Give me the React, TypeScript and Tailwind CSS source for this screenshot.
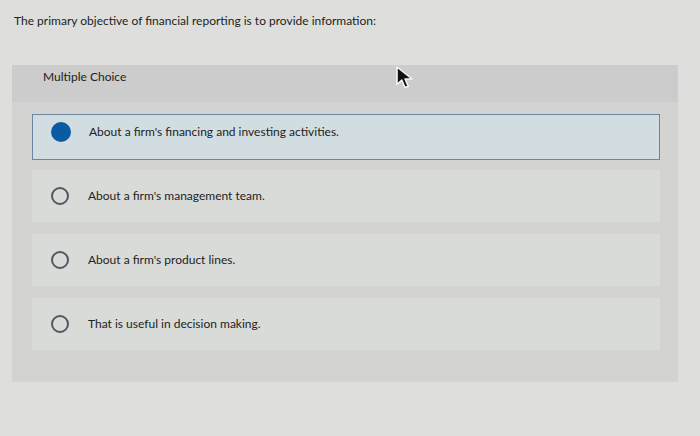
const options = [
  { text: "About a firm's financing and investing activities.", selected: true },
  { text: "About a firm's management team.", selected: false },
  { text: "About a firm's product lines.", selected: false },
  { text: 'That is useful in decision making.', selected: false },
];

function Cursor() {
  return (
    <svg className="absolute left-[394px] top-[65px]" width="24" height="26" viewBox="0 0 24 26">
      <path
        d="M3 2 L3 19.5 L7.8 15.2 L11 22.5 L14.2 21.2 L11.1 14 L18 14 Z"
        fill="#111"
        stroke="#f4f4f4"
        strokeWidth="1.6"
        strokeLinejoin="round"
      />
    </svg>
  );
}

export default function App() {
  return (
    <div className="relative w-[700px] h-[436px] bg-[#dedfdc] text-[#222] font-['Lato','Liberation_Sans',sans-serif] overflow-hidden">
      <p className="pt-[12px] pl-[14px] text-[12px] leading-[18px]">
        The primary objective of financial reporting is to provide information:
      </p>
      <div className="mt-[35px] ml-[12px] w-[666px] h-[317px] bg-[#d3d4d2]">
        <div className="h-[37px] bg-[#cbcccb] pt-[4px] pl-[31px] text-[12px] leading-[16px]">Multiple Choice</div>
        <div className="flex flex-col pl-[20px] pr-[18px]">
          {options.map((o, i) => (
            <div
              key={i}
              className={
                o.selected
                  ? 'mt-[12px] h-[46px] pb-[10px] flex items-center bg-[#d2dde1] border border-[#6b86a0]'
                  : i === 1
                    ? 'mt-[10px] h-[52px] flex items-center bg-[#d9dbd8]'
                    : 'mt-[12px] h-[52px] flex items-center bg-[#d9dbd8]'
              }
            >
              <div className="w-[56px] flex justify-center">
                {o.selected ? (
                  <span className="block w-[20px] h-[20px] rounded-full bg-[#0b5ba3]" />
                ) : (
                  <span className="block w-[18px] h-[18px] rounded-full border-2 border-[#4d5a62]" />
                )}
              </div>
              <span className="text-[12px] leading-[16px]">{o.text}</span>
            </div>
          ))}
        </div>
      </div>
      <Cursor />
    </div>
  );
}
